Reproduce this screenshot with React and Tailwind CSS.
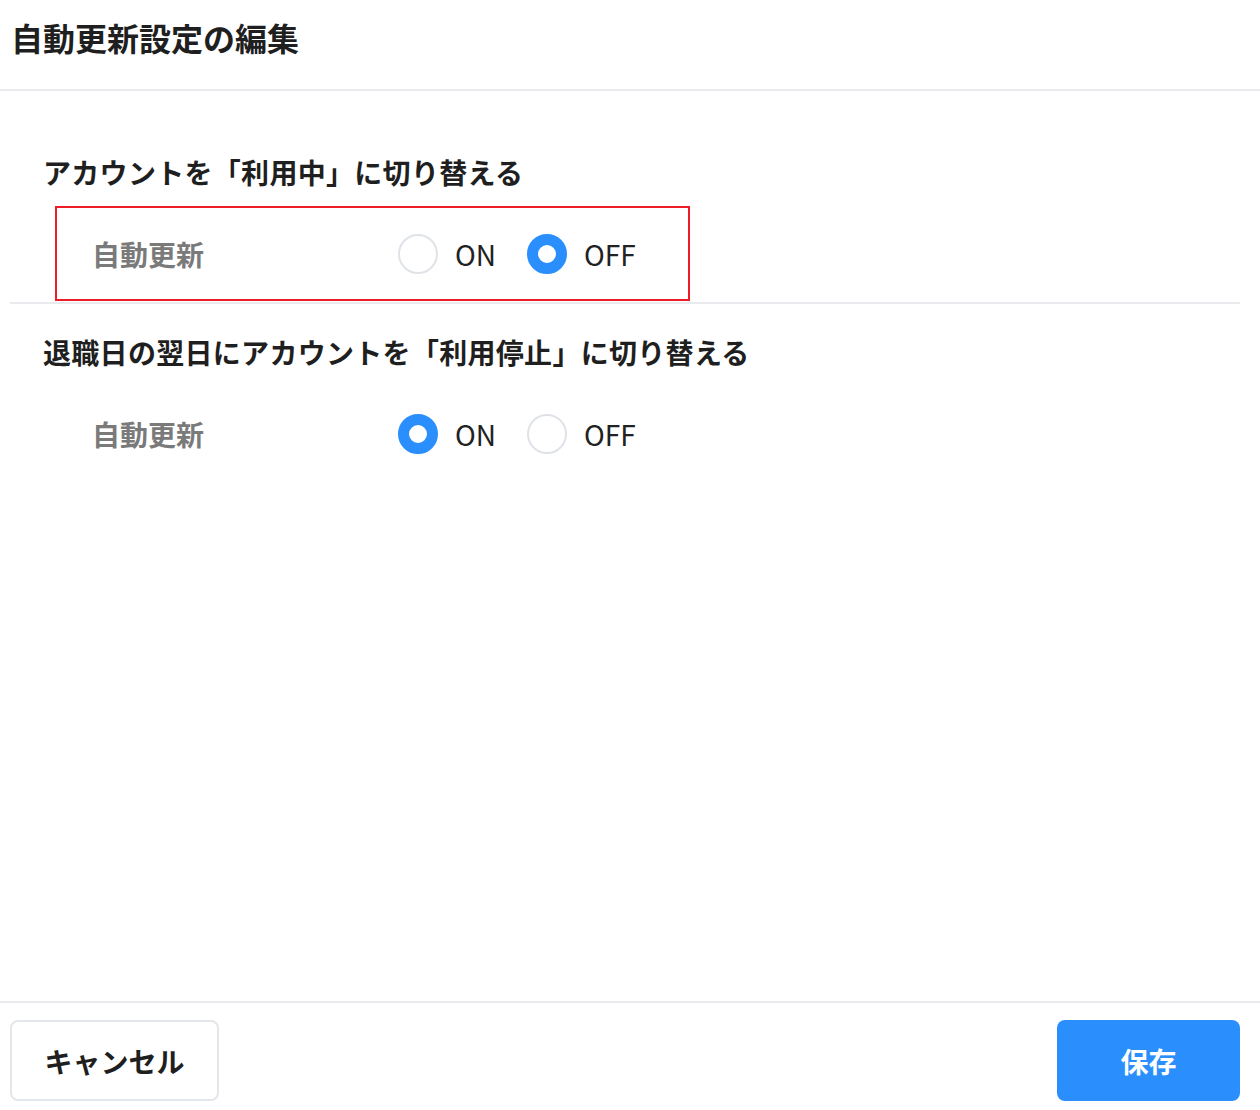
import React, { useState } from 'react';

const font = { fontFamily: '"Noto Sans CJK JP", "Noto Sans", sans-serif' };

function Radio({ checked, label, onClick }) {
  return (
    <button type="button" onClick={onClick} className="flex items-center gap-[17px]">
      {checked ? (
        <span className="h-[40px] w-[40px] rounded-full border-[11px] border-[#2a8ffd] bg-white" />
      ) : (
        <span className="h-[40px] w-[40px] rounded-full border-2 border-[#dfe3e8] bg-white" />
      )}
      <span className="text-[28px] leading-none text-[#222]">{label}</span>
    </button>
  );
}

function SettingRow({ value, onChange, highlight }) {
  return (
    <div
      className={
        'ml-[45px] flex h-[95px] w-[635px] items-center border-2 pl-[35px] ' +
        (highlight ? 'border-[#ee1c25]' : 'border-transparent')
      }
    >
      <span className="w-[306px] text-[28px] font-bold text-[#7a7a7a]">自動更新</span>
      <div className="flex items-center gap-[31px]">
        <Radio checked={value} label="ON" onClick={() => onChange(true)} />
        <Radio checked={!value} label="OFF" onClick={() => onChange(false)} />
      </div>
    </div>
  );
}

export default function App() {
  const [active, setActive] = useState(false);
  const [suspend, setSuspend] = useState(true);

  return (
    <div style={font} className="flex h-[1110px] w-[1260px] flex-col bg-white text-[#1f1f1f]">
      {/* Header */}
      <header className="flex h-[91px] items-center border-b-2 border-[#e8eaed] px-[11px] pb-[16px]">
        <h1 className="text-[32px] font-bold leading-none">自動更新設定の編集</h1>
      </header>

      {/* Body */}
      <main className="flex-1 pl-[10px] pr-[20px]">
        <section className="pt-[61px]">
          <h2 className="pl-[33px] text-[28px] font-bold leading-[40px] tracking-[0.3px]">アカウントを「利用中」に切り替える</h2>
          <div className="mt-[14px]">
            <SettingRow value={active} onChange={setActive} highlight />
          </div>
        </section>

        <div className="mt-[1px] border-t-2 border-[#e8eaed]" />

        <section className="pt-[28px]">
          <h2 className="pl-[33px] text-[28px] font-bold leading-[40px] tracking-[0.3px]">退職日の翌日にアカウントを「利用停止」に切り替える</h2>
          <div className="mt-[14px]">
            <SettingRow value={suspend} onChange={setSuspend} />
          </div>
        </section>
      </main>

      {/* Footer */}
      <footer className="flex items-start justify-between border-t-2 border-[#e8eaed] pb-[9px] pl-[10px] pr-[20px] pt-[17px]">
        <button className="flex h-[81px] w-[209px] items-center justify-center rounded-[8px] border-2 border-[#e3e6ea] bg-white text-[28px] font-bold text-[#1f1f1f]">
          キャンセル
        </button>
        <button className="flex h-[81px] w-[183px] items-center justify-center rounded-[8px] bg-[#2a8ffd] text-[28px] font-bold text-white">
          保存
        </button>
      </footer>
    </div>
  );
}
